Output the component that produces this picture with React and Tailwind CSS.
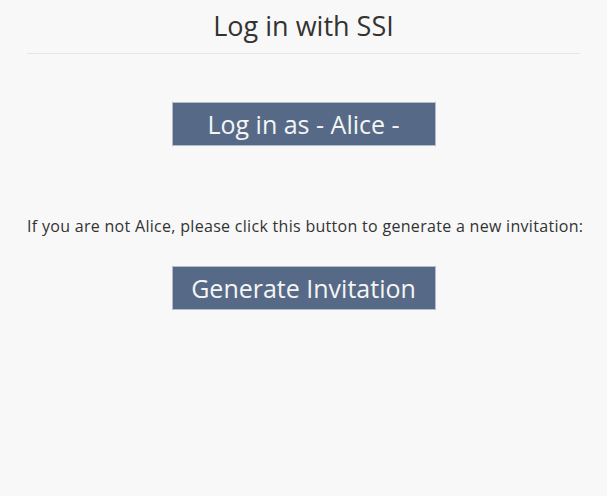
import React from 'react';

function ActionButton({ children }) {
  return (
    <button
      type="button"
      className="w-[264px] h-[44px] bg-[#566a87] border border-[#b3bccb] text-[#f5f5f5] text-[25px] leading-none flex items-center justify-center"
    >
      {children}
    </button>
  );
}

export default function App() {
  return (
    <div
      className="min-h-screen bg-[#f8f8f8] px-[27px] text-[#333333]"
      style={{ fontFamily: '"Open Sans", Lato, sans-serif' }}
    >
      <h1 className="pt-[8px] text-[27px] leading-[36px] text-center">Log in with SSI</h1>
      <hr className="mt-[9px] border-t border-[#e6e6e6]" />

      <div className="mt-[48px] flex justify-center">
        <ActionButton>Log in as - Alice -</ActionButton>
      </div>

      <p className="mt-[69px] text-[16px] tracking-[0.3px] leading-[22px] text-center whitespace-nowrap">
        If you are not Alice, please click this button to generate a new invitation:
      </p>

      <div className="mt-[29px] flex justify-center">
        <ActionButton>Generate Invitation</ActionButton>
      </div>
    </div>
  );
}
